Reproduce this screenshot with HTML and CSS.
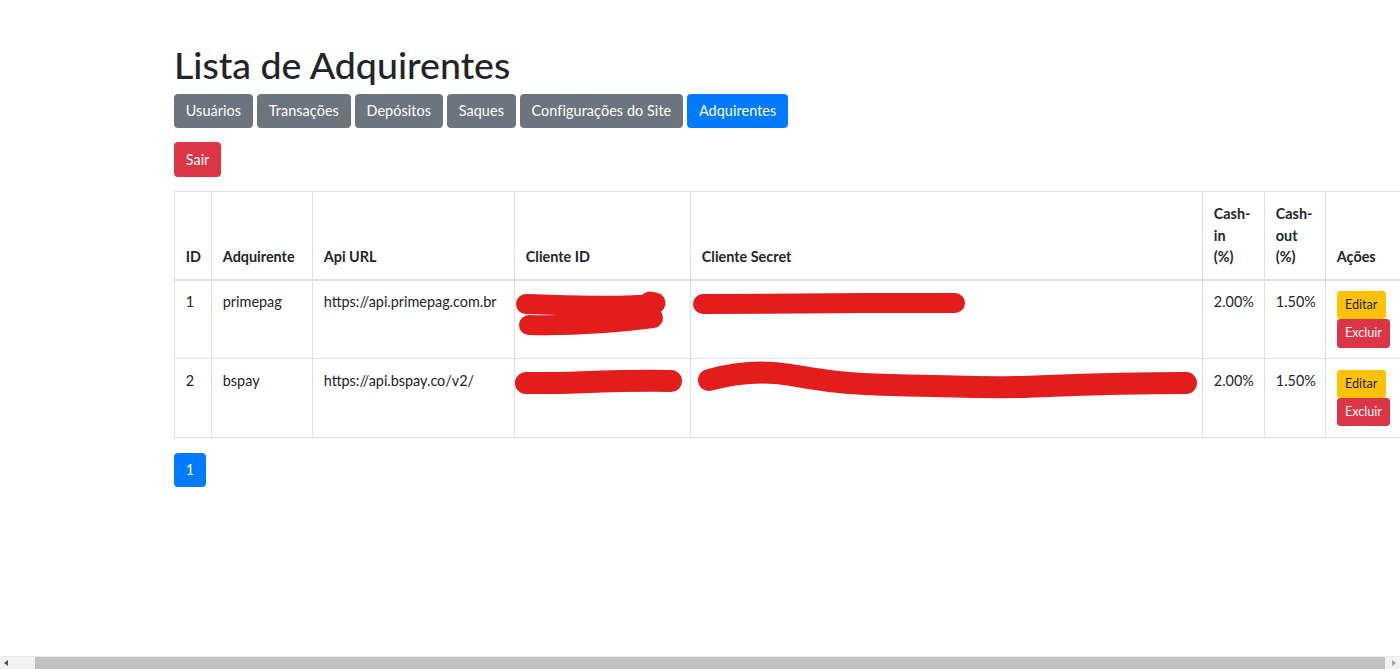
FILE: index.html
```html
<!DOCTYPE html>
<html lang="pt-BR">
<head>
<meta charset="utf-8">
<title>Lista de Adquirentes</title>
<link rel="stylesheet" href="styles.css">
</head>
<body>
<div class="page">
  <h1 class="title">Lista de Adquirentes</h1>
  <nav class="nav">
    <a class="btn btn-secondary">Usuários</a>
    <a class="btn btn-secondary">Transações</a>
    <a class="btn btn-secondary">Depósitos</a>
    <a class="btn btn-secondary">Saques</a>
    <a class="btn btn-secondary">Configurações do Site</a>
    <a class="btn btn-primary">Adquirentes</a>
  </nav>
  <div class="logout"><a class="btn btn-danger">Sair</a></div>

  <table class="table">
    <colgroup>
      <col class="c-id"><col class="c-name"><col class="c-url"><col class="c-cid">
      <col class="c-secret"><col class="c-in"><col class="c-out"><col class="c-act">
    </colgroup>
    <thead>
      <tr>
        <th>ID</th>
        <th>Adquirente</th>
        <th>Api URL</th>
        <th>Cliente ID</th>
        <th>Cliente Secret</th>
        <th class="th-narrow">Cash-in (%)</th>
        <th class="th-narrow">Cash-out (%)</th>
        <th>Ações</th>
      </tr>
    </thead>
    <tbody>
      <tr>
        <td>1</td>
        <td>primepag</td>
        <td>https://api.primepag.com.br</td>
        <td class="redacted">
          <svg class="scribble" viewBox="0 0 176 79" width="176" height="79">
            <path d="M11 23 C50 24, 100 27, 139 23" />
            <path d="M135 21 L140 22" class="blob" />
            <path d="M14 44 C60 45, 100 42, 138 37" />
          </svg>
        </td>
        <td class="redacted">
          <svg class="scribble" viewBox="0 0 512 79" width="512" height="79">
            <path d="M12 23 C90 22, 180 22, 264 22" />
          </svg>
        </td>
        <td>2.00%</td>
        <td>1.50%</td>
        <td>
          <div class="actions">
            <a class="btn btn-sm btn-warning">Editar</a>
            <a class="btn btn-sm btn-danger">Excluir</a>
          </div>
        </td>
      </tr>
      <tr>
        <td>2</td>
        <td>bspay</td>
        <td>https://api.bspay.co/v2/</td>
        <td class="redacted">
          <svg class="scribble scribble-wide" viewBox="0 0 176 79" width="176" height="79">
            <path d="M11 24 C50 25, 90 21, 156 22" />
          </svg>
        </td>
        <td class="redacted">
          <svg class="scribble scribble-wide" viewBox="0 0 512 79" width="512" height="79">
            <path d="M18 21 C40 15, 70 11, 100 16 S150 25, 200 26 S300 29, 330 28 S420 24, 495 24" />
          </svg>
        </td>
        <td>2.00%</td>
        <td>1.50%</td>
        <td>
          <div class="actions">
            <a class="btn btn-sm btn-warning">Editar</a>
            <a class="btn btn-sm btn-danger">Excluir</a>
          </div>
        </td>
      </tr>
    </tbody>
  </table>

  <ul class="pagination">
    <li><a class="page-link active">1</a></li>
  </ul>
</div>

<div class="hscroll">
  <span class="arrow arrow-left"></span>
  <span class="track"><span class="thumb"></span></span>
  <span class="arrow arrow-right"></span>
</div>
</body>
</html>
```
FILE: styles.css
```css
html, body {
  margin: 0;
  padding: 0;
  overflow: hidden;
  background: #fff;
}
body {
  font-family: Lato, "Liberation Sans", sans-serif;
  font-size: 14.4px;
  line-height: 1.5;
  color: #212529;
  height: 669px;
}
.page {
  padding: 43.2px 0 0 174px;
}
.title {
  margin: 0 0 7.2px;
  font-size: 37.5px;
  font-weight: 500;
  line-height: 43.2px;
  color: #212529;
}
.nav {
  display: flex;
  gap: 4px;
  margin-bottom: 14.4px;
}
.nav .btn {
  letter-spacing: 0.08px;
}
.logout {
  margin-bottom: 14.4px;
  display: flex;
}
.btn {
  display: inline-block;
  padding: 5.4px 10.8px;
  font-size: 14.4px;
  line-height: 1.5;
  border: 1px solid transparent;
  border-radius: 3.6px;
  color: #fff;
  text-decoration: none;
  white-space: nowrap;
}
.btn-secondary { background: #6c757d; border-color: #6c757d; }
.btn-primary { background: #007bff; border-color: #007bff; }
.btn-danger { background: #dc3545; border-color: #dc3545; }
.btn-warning { background: #ffc107; border-color: #ffc107; color: #212529; }
.btn-sm {
  padding: 3.6px 7.2px;
  font-size: 12.6px;
  line-height: 1.5;
  border-radius: 2.9px;
}

.table {
  width: 1227px;
  table-layout: fixed;
  border-collapse: collapse;
  margin-bottom: 15px;
  color: #212529;
}
.c-id { width: 37px; }
.c-name { width: 101px; }
.c-url { width: 202px; }
.c-cid { width: 176px; }
.c-secret { width: 512px; }
.c-in { width: 62px; }
.c-out { width: 61px; }
.c-act { width: 76px; }

.table th,
.table td {
  padding: 10.8px;
  border: 1px solid #dee2e6;
  text-align: left;
  vertical-align: top;
}
.table th {
  vertical-align: bottom;
  border-bottom: 2px solid #dee2e6;
  font-weight: 700;
}
.table .th-narrow {
  word-spacing: 6px;
}
.redacted {
  position: relative;
}
.scribble {
  position: absolute;
  left: 0;
  top: 0;
  overflow: visible;
  fill: none;
  stroke: #e31c1c;
  stroke-width: 20;
  stroke-linecap: round;
  stroke-linejoin: round;
}
.scribble .blob {
  stroke-width: 21;
}
.scribble-wide {
  stroke-width: 22;
}
.actions {
  display: flex;
  flex-direction: column;
  align-items: flex-start;
}

.pagination {
  display: flex;
  list-style: none;
  margin: 0;
  padding: 0;
}
.page-link {
  display: block;
  padding: 7.2px 10.8px;
  line-height: 1.25;
  border: 1px solid #007bff;
  border-radius: 3.6px;
  background: #007bff;
  color: #fff;
  text-decoration: none;
}

.hscroll {
  position: fixed;
  left: 0;
  right: 0;
  bottom: 0;
  height: 12px;
  display: flex;
  align-items: stretch;
  background: #f1f1f1;
  border-top: 1px solid #e9e9e9;
}
.arrow {
  width: 12px;
  display: flex;
  align-items: center;
  justify-content: center;
}
.arrow-left::before {
  content: "";
  border-top: 3.5px solid transparent;
  border-bottom: 3.5px solid transparent;
  border-right: 4px solid #505050;
}
.arrow-right::before {
  content: "";
  border-top: 3.5px solid transparent;
  border-bottom: 3.5px solid transparent;
  border-left: 4px solid #a3a3a3;
}
.track {
  flex: 1;
  display: flex;
  padding-left: 23px;
  padding-right: 3px;
}
.thumb {
  flex: 1;
  background: #c1c1c1;
}
```
